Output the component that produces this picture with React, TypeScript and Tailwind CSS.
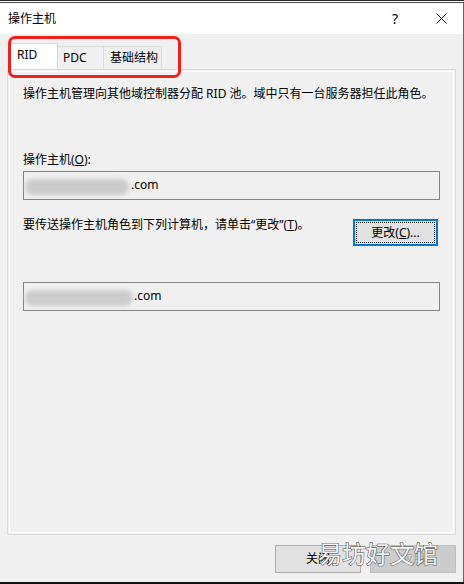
export default function App() {
  return (
    <div className="relative w-[464px] h-[584px] flex flex-col bg-[#f0f0f0] overflow-hidden font-['Noto_Sans','Noto_Sans_CJK_SC',sans-serif] text-[12px] leading-[16px] text-[#000]">
      {/* window top edge */}
      <div className="h-[1px] bg-[#262626]" />
      <div className="h-[1px] bg-white" />
      <div className="h-[1px] bg-[#4a4a4a]" />

      <div className="flex-1 flex flex-col border-r border-[#1f78c8]">
        {/* title bar */}
        <div className="h-[31px] bg-white flex items-center pl-[8px] pr-[16px]">
          <span className="flex-1">操作主机</span>
          <span className="w-[8px] mr-[36px] text-[14px]">?</span>
          <svg width="11" height="11" viewBox="0 0 11 11">
            <path d="M0.5 0.5 L10.5 10.5 M10.5 0.5 L0.5 10.5" stroke="#111" strokeWidth="1" />
          </svg>
        </div>

        <div className="flex-1 flex flex-col px-[7px] pt-[9px]">
          {/* tabs */}
          <div className="flex items-end h-[26px] ml-[1px]">
            <div className="w-[50px] h-[26px] bg-white border border-b-0 border-[#d9d9d9] pl-[8px] pt-[3px]">
              RID
            </div>
            <div className="w-[46px] h-[23px] border-t border-r border-[#d9d9d9] pl-[5px] pt-[3px]">
              PDC
            </div>
            <div className="w-[58px] h-[23px] border-t border-r border-[#d9d9d9] pl-[6px] pt-[3px]">
              基础结构
            </div>
          </div>

          {/* tab page */}
          <div className="h-[466px] border border-[#d9d9d9] p-[1px]">
            <div className="h-full border border-white pl-[13px] pt-[14px]">
              <p>操作主机管理向其他域控制器分配 RID 池。域中只有一台服务器担任此角色。</p>

              <p className="mt-[50px]">
                操作主机(<span className="underline">O</span>):
              </p>
              <div className="mt-[3px] w-[417px] h-[29px] border border-[#838383] flex items-center pb-[2px]">
                <div className="ml-[1px] w-[104px] h-[16px] mt-[4px] rounded-full bg-[#cbcbcb] blur-[2px]" />
                <span className="ml-[2px]">.com</span>
              </div>

              <div className="mt-[17px] w-[415px] flex items-start justify-between">
                <p>要传送操作主机角色到下列计算机，请单击“更改”(<span className="underline">T</span>)。</p>
                <button className="mt-[2px] w-[85px] h-[27px] border-2 border-[#0078d7] bg-[#e1e1e1] p-[1px]">
                  <span className="h-full flex items-center justify-center border border-dotted border-black">
                    更改(<span className="underline">C</span>)...
                  </span>
                </button>
              </div>

              <div className="mt-[36px] w-[417px] h-[29px] border border-[#838383] flex items-center pb-[2px]">
                <div className="ml-[1px] w-[108px] h-[16px] mt-[4px] rounded-full bg-[#cbcbcb] blur-[2px]" />
                <span className="ml-[1px]">.com</span>
              </div>
            </div>
          </div>

          {/* footer buttons */}
          <div className="mt-[10px] flex justify-end gap-[9px]">
            <button className="w-[86px] h-[28px] border border-[#adadad] bg-[#e1e1e1]">关闭</button>
            <button className="w-[86px] h-[28px] border border-[#bfbfbf] bg-[#cccccc] text-[#a3a3a3]">应用</button>
          </div>
        </div>
      </div>

      {/* window bottom edge */}
      <div className="h-[2px] bg-[#111]" />

      {/* annotation around tabs */}
      <div className="absolute left-[8px] top-[36px] w-[173px] h-[42px] border-[3px] border-[#f0201e] rounded-[7px]" />

      {/* watermark */}
      <div className="absolute left-[318px] top-[537px] text-[24px] leading-[32px] text-[#f6f6f6] [-webkit-text-stroke:1px_#444] [paint-order:stroke_fill] font-['Noto_Sans_CJK_SC',sans-serif]">
        易坊好文馆
      </div>
    </div>
  )
}
